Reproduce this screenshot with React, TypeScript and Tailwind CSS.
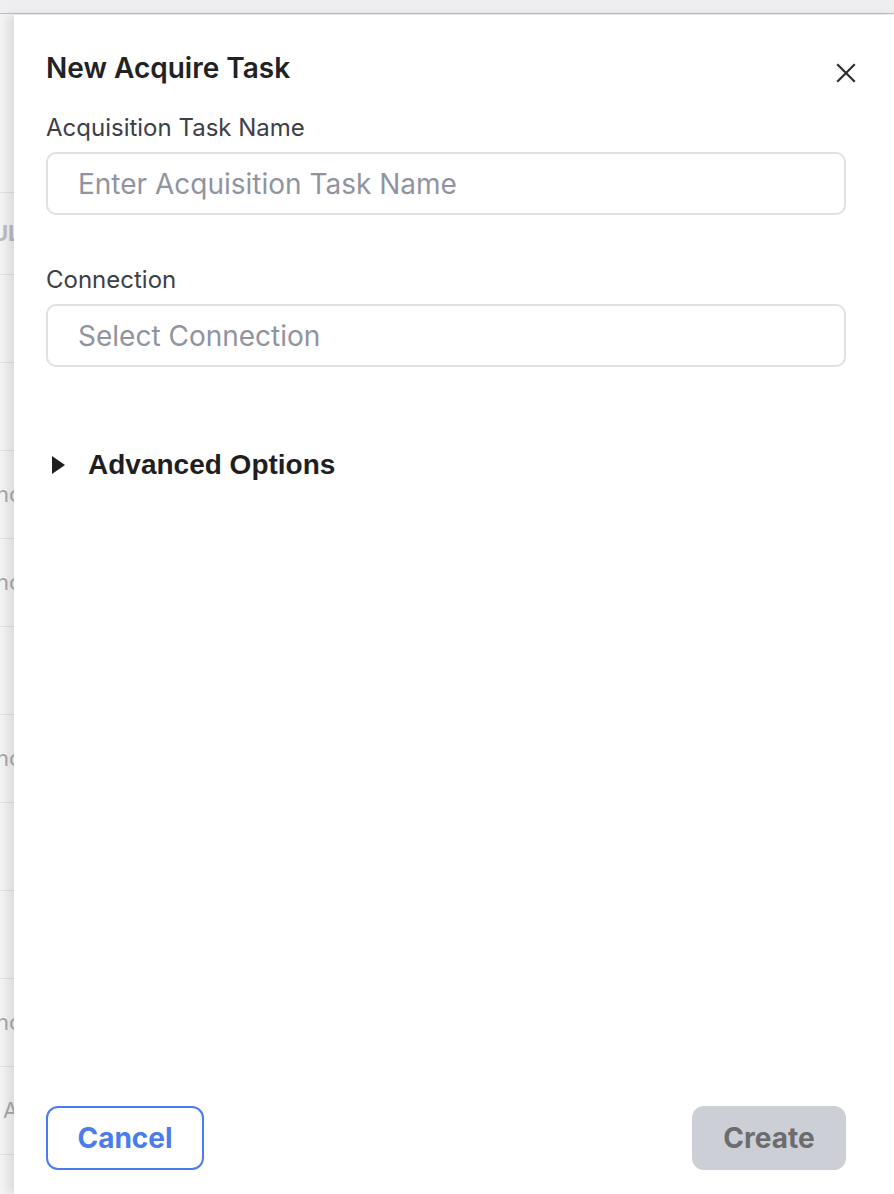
import React from "react";

const rows = [
  { h: 82, text: "UL", bold: true },
  { h: 88, text: "" },
  { h: 88, text: "" },
  { h: 88, text: "nc" },
  { h: 88, text: "nc" },
  { h: 88, text: "" },
  { h: 88, text: "nc" },
  { h: 88, text: "" },
  { h: 88, text: "" },
  { h: 88, text: "nc" },
  { h: 88, text: "A" },
  { h: 88, text: "" },
];

export default function App() {
  return (
    <div
      className="relative h-[1194px] w-[894px] overflow-hidden bg-[#f4f4f5]"
      style={{ fontFamily: "Inter, 'Noto Sans', sans-serif" }}
    >
      {/* background page (dimmed) */}
      <div className="h-[14px] border-b border-[#bdbdc0] bg-[#efeff1]" />
      <div className="mt-[178px] flex flex-col border-t border-[#e3e3e5]">
        {rows.map((r, i) => (
          <div
            key={i}
            className="flex items-center border-b border-[#e3e3e5] text-[22px] text-[#a9a9ab]"
            style={{ height: r.h }}
          >
            {r.text && (
              <span className={r.bold ? "ml-[-8px] font-bold text-[#bdbdbf]" : r.text === "A" ? "ml-[3px]" : "ml-[-4px]"}>
                {r.text}
              </span>
            )}
          </div>
        ))}
      </div>

      {/* drawer */}
      <div className="absolute bottom-0 left-[14px] right-0 top-[15px] flex flex-col bg-white pl-[32px] pr-[48px] shadow-[-6px_0_10px_rgba(0,0,0,0.10)]">
        <button className="absolute right-[36px] top-[46px] flex h-[24px] w-[24px] items-center justify-center text-[#2e2e30]">
          <svg width="20" height="20" viewBox="0 0 20 20" fill="none" stroke="currentColor" strokeWidth="2.2" strokeLinecap="square">
            <path d="M2 2 L18 18 M18 2 L2 18" />
          </svg>
        </button>

        <h2 className="mt-[35px] text-[28px] font-semibold leading-[36px] text-[#222224]">New Acquire Task</h2>

        <label className="mt-[26px] text-[24px] leading-[32px] text-[#3d4047]">Acquisition Task Name</label>
        <div className="mt-[8px] flex h-[63px] items-center rounded-[10px] border-2 border-[#e0e1e5] px-[30px] text-[28px] text-[#9194a0]">
          Enter Acquisition Task Name
        </div>

        <label className="mt-[49px] text-[24px] leading-[32px] text-[#3d4047]">Connection</label>
        <div className="mt-[8px] flex h-[63px] items-center rounded-[10px] border-2 border-[#e0e1e5] px-[30px] text-[28px] text-[#9194a0]">
          Select Connection
        </div>

        <div className="mt-[82px] flex h-[32px] items-center text-[#1f1f21]">
          <svg width="15" height="20" viewBox="0 0 15 20" className="ml-[5px]">
            <path d="M1 1 L14 10 L1 19 Z" fill="currentColor" />
          </svg>
          <span
            className="ml-[22px] text-[28px] font-bold"
            style={{ fontFamily: "'Liberation Sans', Arial, sans-serif" }}
          >
            Advanced Options
          </span>
        </div>

        <div className="mt-auto mb-[24px] flex items-center justify-between">
          <button className="flex h-[64px] w-[158px] items-center justify-center rounded-[12px] border-2 border-[#4a7cf0] text-[28px] font-bold text-[#4a7cf0]">
            Cancel
          </button>
          <button className="flex h-[64px] w-[154px] items-center justify-center rounded-[12px] bg-[#cdcfd6] text-[28px] font-bold text-[#6c6c6e]">
            Create
          </button>
        </div>
      </div>
    </div>
  );
}
